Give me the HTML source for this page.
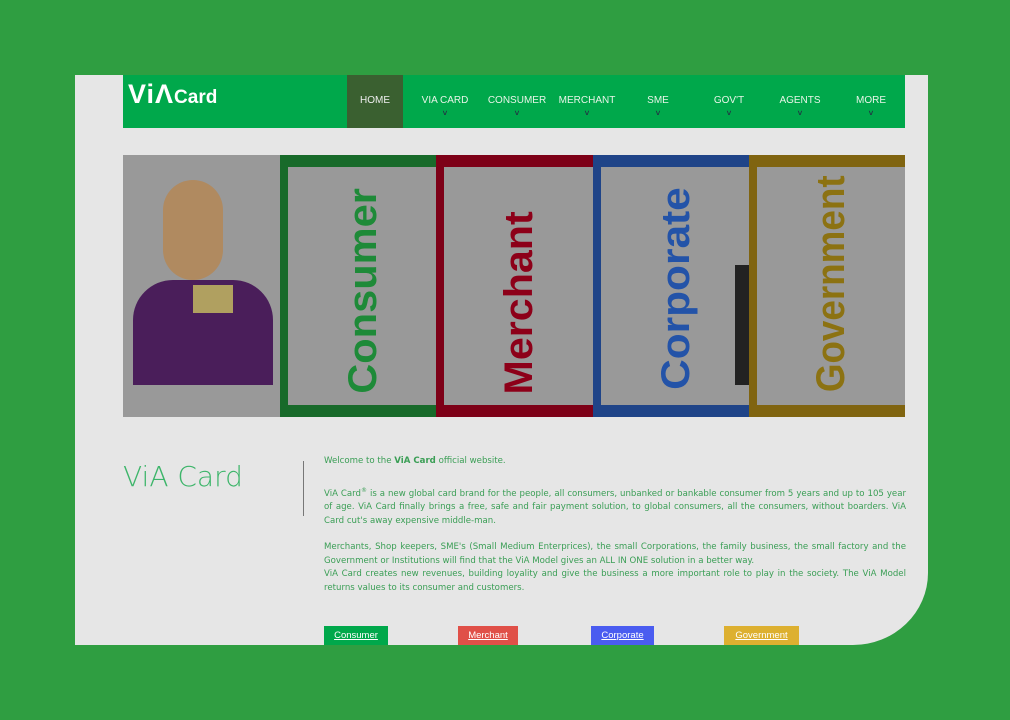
<!DOCTYPE html>
<html><head><meta charset="utf-8"><style>
body{margin:0;width:1010px;height:720px;background:#2f9e41;position:relative;overflow:hidden;font-family:"Liberation Sans",sans-serif}
#p{position:absolute;left:75px;top:75px;width:853px;height:570px;background:#e6e6e6;border-bottom-right-radius:75px 72px}
#h{position:absolute;left:123px;top:75px;width:782px;height:53px;background:#00a84b}
.logo{position:absolute;left:5px;top:4px;color:#fff;font-weight:bold;font-size:27px;letter-spacing:1px}
.logo span{font-size:19px;letter-spacing:0}
.n{position:absolute;top:0;height:53px;width:70px;text-align:center;color:#e8f5e8;font-size:10px;line-height:51px}
.n i{position:absolute;left:0;right:0;top:35px;line-height:8px;font-style:normal;font-size:8px;font-weight:bold;color:#234}
#b{position:absolute;left:123px;top:155px;width:782px;height:262px;background:#999;overflow:hidden}
.c{position:absolute;top:0;height:262px;box-sizing:border-box;border-style:solid;border-width:12px 0 12px 8px}
.c b{position:absolute;left:50%;bottom:12px;margin-left:-24px;writing-mode:vertical-rl;transform-origin:center;font-family:"Liberation Sans",sans-serif;font-size:40px;font-weight:900;white-space:nowrap;line-height:48px}
.t{position:absolute;left:324px;width:582px;color:#3a9e55;font-family:"DejaVu Sans",sans-serif;font-size:8.6px;line-height:13.5px;text-align:justify}
.bt{position:absolute;top:626px;height:19px;color:#fff;font-size:9.5px;text-decoration:underline;line-height:19px;text-align:center}
</style></head><body>
<div id="p"></div>
<div id="h">
<div class="logo">ViΛ<span>Card</span></div>
<div class="n" style="left:224px;width:56px;background:#3a6030;color:#eee">HOME</div>
<div class="n" style="left:287px">VIA CARD<i>˅</i></div>
<div class="n" style="left:359px">CONSUMER<i>˅</i></div>
<div class="n" style="left:429px">MERCHANT<i>˅</i></div>
<div class="n" style="left:500px">SME<i>˅</i></div>
<div class="n" style="left:571px">GOV'T<i>˅</i></div>
<div class="n" style="left:642px">AGENTS<i>˅</i></div>
<div class="n" style="left:713px">MORE<i>˅</i></div>
</div>
<div id="b">
<div style="position:absolute;left:10px;top:125px;width:140px;height:105px;background:#4a1e5a;border-radius:40px 40px 0 0"></div>
<div style="position:absolute;left:40px;top:25px;width:60px;height:100px;background:#b08a60;border-radius:30px"></div>
<div style="position:absolute;left:70px;top:130px;width:40px;height:28px;background:#b0a060"></div>
<div style="position:absolute;left:612px;top:110px;width:14px;height:120px;background:#222"></div>
<div class="c" style="left:157px;width:157px;border-color:#186a2a"><b style="color:#1e8a38;transform:rotate(180deg) scaleY(1.04);bottom:15px">Consumer</b></div>
<div class="c" style="left:313px;width:157px;border-color:#7d0017"><b style="color:#8d0019;transform:rotate(180deg) scaleY(1.03);bottom:13px">Merchant</b></div>
<div class="c" style="left:470px;width:157px;border-color:#1f4488"><b style="color:#2353a8;transform:rotate(180deg) scaleY(1.06);bottom:21px">Corporate</b></div>
<div class="c" style="left:626px;width:156px;border-color:#806410"><b style="color:#8c7212;transform:rotate(180deg) scaleY(0.92);bottom:3px">Government</b></div>
</div>
<div style="position:absolute;left:123px;top:460px;color:#3db56a;font-family:'DejaVu Sans',sans-serif;font-size:28px;font-weight:300">ViA Card</div>
<div style="position:absolute;left:303px;top:461px;width:1px;height:55px;background:#777"></div>
<div class="t" style="top:455px">Welcome to the <b>ViA Card</b> official website.</div>
<div class="t" style="top:484px">ViA Card<sup style="font-size:6px">®</sup> is a new global card brand for the people, all consumers, unbanked or bankable consumer from 5 years and up to 105 year of age. ViA Card finally brings a free, safe and fair payment solution, to global consumers, all the consumers, without boarders. ViA Card cut's away expensive middle-man.</div>
<div class="t" style="top:541px">Merchants, Shop keepers, SME's (Small Medium Enterprices), the small Corporations, the family business, the small factory and the Government or Institutions will find that the ViA Model gives an ALL IN ONE solution in a better way.<br>ViA Card creates new revenues, building loyality and give the business a more important role to play in the society. The ViA Model returns values to its consumer and customers.</div>
<div class="bt" style="left:324px;width:64px;background:#00a84b">Consumer</div>
<div class="bt" style="left:458px;width:60px;background:#e05048">Merchant</div>
<div class="bt" style="left:591px;width:63px;background:#4a5cf0">Corporate</div>
<div class="bt" style="left:724px;width:75px;background:#ddb030">Government</div>
</body></html>
